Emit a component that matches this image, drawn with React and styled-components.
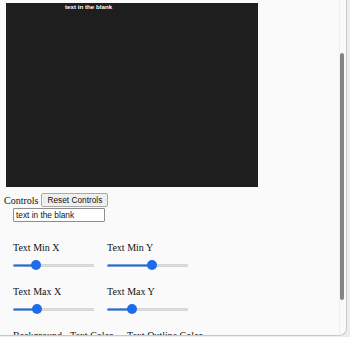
import React, { useState } from 'react';
import styled, { createGlobalStyle } from 'styled-components';

const GlobalStyle = createGlobalStyle`
   html, body {
      margin: 0;
      padding: 0;
      background: #ededed;
      overflow: hidden;
   }
`;

const Window = styled.div`
   width: 347px;
   height: 336px;
   box-sizing: border-box;
   display: flex;
   background: #fafafa;
   border-right: 1px solid #c8c8c8;
   border-bottom: 1px solid #c8c8c8;
   border-bottom-right-radius: 8px;
   overflow: hidden;
`;

const Page = styled.div`
   flex: 1;
   padding: 3px 0 0 4px;
   font-family: 'Liberation Serif', serif;
   font-size: 10px;
   color: #111;
   overflow: hidden;
`;

const Canvas = styled.svg`
   display: block;
   margin-left: 2px;
   width: 252px;
   height: 184px;
   background: #1e1e1e;
`;

const ControlsRow = styled.div`
   display: flex;
   align-items: center;
   gap: 3px;
   margin-top: 6px;
   height: 14px;
`;

const Button = styled.button`
   font-family: 'Liberation Sans', Arial, sans-serif;
   font-size: 8.3px;
   height: 14px;
   padding: 0 5px;
   background: #efefef;
   color: #111;
   border: 1px solid #a8a8a8;
   border-radius: 2px;
`;

const TextInput = styled.input`
   display: block;
   box-sizing: border-box;
   margin: 1px 0 0 9px;
   width: 92px;
   height: 14px;
   padding: 0 2px;
   font-family: 'Liberation Sans', Arial, sans-serif;
   font-size: 8.3px;
   color: #111;
   background: #fff;
   border: 1px solid #8d8d8d;
   border-radius: 1px;
   outline: none;
`;

const SliderGrid = styled.div`
   display: grid;
   grid-template-columns: 94px 94px;
   row-gap: 16px;
   margin: 20px 0 0 9px;
`;

const Field = styled.div`
   display: flex;
   flex-direction: column;
`;

const Label = styled.span`
   line-height: 12px;
   white-space: nowrap;
`;

const Slider = styled.input`
   -webkit-appearance: none;
   appearance: none;
   margin: 6px 0 0 0;
   width: 81px;
   height: 10px;
   background: transparent;
   &::-webkit-slider-runnable-track {
      height: 3px;
      border-radius: 2px;
      background: ${(p) =>
         `linear-gradient(to right, #1b6ee8 0 ${p.$pct}%, #dcdcdc ${p.$pct}% 100%)`};
      box-shadow: inset 0 0 0 0.5px #cfcfcf;
   }
   &::-webkit-slider-thumb {
      -webkit-appearance: none;
      width: 10px;
      height: 10px;
      margin-top: -3.5px;
      border-radius: 50%;
      background: #1b6ee8;
      border: none;
   }
`;

const ColorRow = styled.div`
   display: flex;
   gap: 6px;
   margin: 16px 0 0 9px;
`;

const ColorField = styled.div`
   min-width: 51px;
   line-height: 12px;
   white-space: nowrap;
`;

const ScrollTrack = styled.div`
   width: 6px;
   display: flex;
   flex-direction: column;
   border-left: 1px solid #f0f0f0;
`;

const ScrollThumb = styled.div`
   margin: 53px 0 0 0;
   width: 4px;
   height: 247px;
   border-radius: 2px;
   background: #858585;
`;

const sliders = [
   { key: 'minX', label: 'Text Min X', value: 25 },
   { key: 'minY', label: 'Text Min Y', value: 57 },
   { key: 'maxX', label: 'Text Max X', value: 27 },
   { key: 'maxY', label: 'Text Max Y', value: 28 },
];

const App = () => {
   const [text, setText] = useState('text in the blank');
   const [values, setValues] = useState(
      Object.fromEntries(sliders.map((s) => [s.key, s.value]))
   );

   const reset = () => {
      setText('text in the blank');
      setValues(Object.fromEntries(sliders.map((s) => [s.key, s.value])));
   };

   return (
      <>
         <GlobalStyle />
         <Window>
            <Page>
               <Canvas viewBox='0 0 252 184'>
                  <text
                     x='59'
                     y='6'
                     fill='#fff'
                     fontFamily='Liberation Sans, Arial, sans-serif'
                     fontWeight='bold'
                     fontSize='6.2'
                  >
                     {text}
                  </text>
               </Canvas>
               <ControlsRow>
                  <span>Controls</span>
                  <Button onClick={reset}>Reset Controls</Button>
               </ControlsRow>
               <TextInput value={text} onChange={(e) => setText(e.target.value)} />
               <SliderGrid>
                  {sliders.map((s) => (
                     <Field key={s.key}>
                        <Label>{s.label}</Label>
                        <Slider
                           type='range'
                           min='0'
                           max='100'
                           value={values[s.key]}
                           $pct={values[s.key]}
                           onChange={(e) =>
                              setValues({ ...values, [s.key]: Number(e.target.value) })
                           }
                        />
                     </Field>
                  ))}
               </SliderGrid>
               <ColorRow>
                  <ColorField>Background</ColorField>
                  <ColorField>Text Color</ColorField>
                  <ColorField>Text Outline Color</ColorField>
               </ColorRow>
            </Page>
            <ScrollTrack>
               <ScrollThumb />
            </ScrollTrack>
         </Window>
      </>
   );
};

export default App;
